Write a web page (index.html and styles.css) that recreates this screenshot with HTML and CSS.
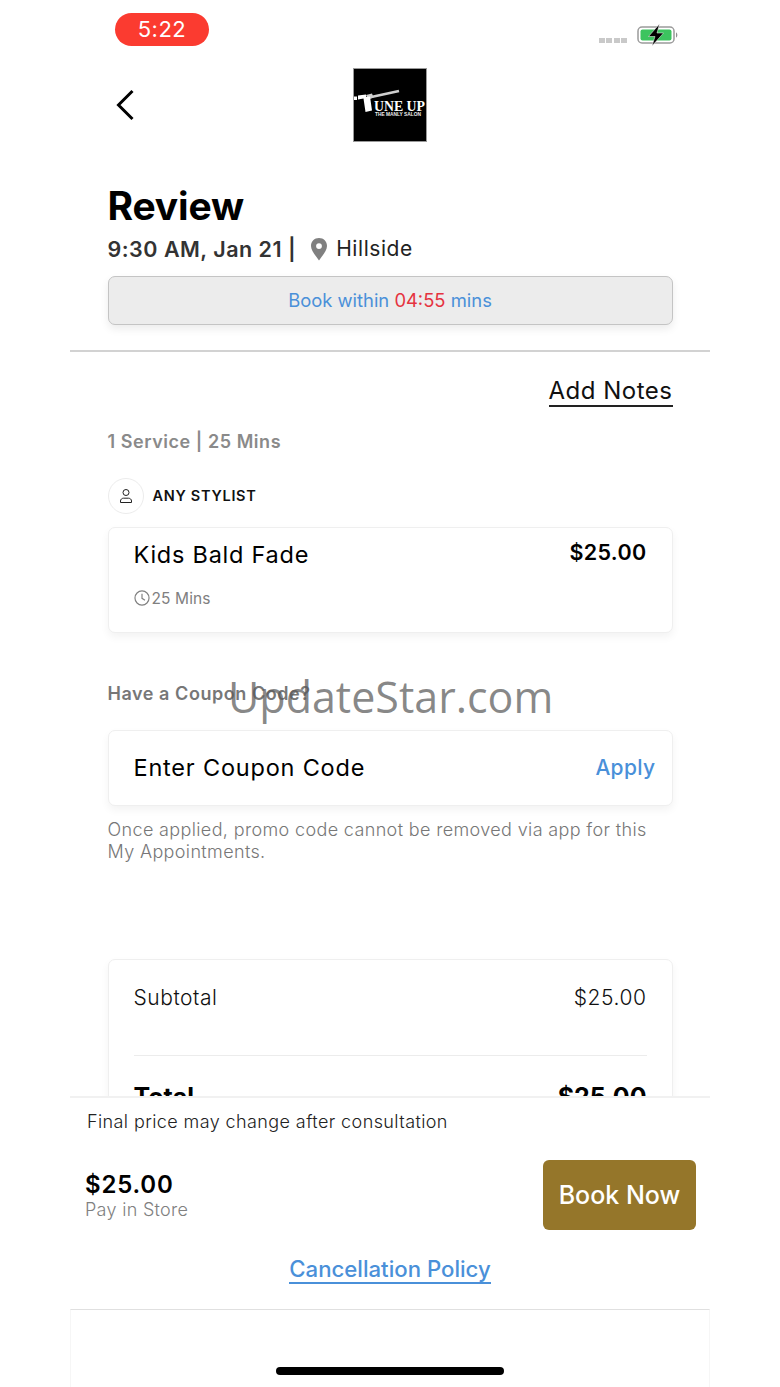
FILE: index.html
```html
<!DOCTYPE html>
<html lang="en">
<head>
    <meta charset="UTF-8">
    <meta name="viewport" content="width=device-width, initial-scale=1.0">
    <title>Review</title>
    <link rel="stylesheet" href="styles.css">
</head>
<body>
    <div class="screen">
        <div class="scroll">
            <div class="status-bar">
                <div class="time-pill">5:22</div>
                <div class="status-icons">
                    <div class="signal"><span></span><span></span><span></span><span></span></div>
                    <svg class="battery" width="42" height="22" viewBox="0 0 42 22">
                        <rect x="1" y="3" width="36" height="16" rx="4" fill="none" stroke="#9b9b9b" stroke-width="1.500"/>
                        <rect x="3.500" y="5.500" width="31" height="11" rx="2" fill="#3cc45f"/>
                        <path d="M39 8.500c1.800 .5 1.800 4.500 0 5z" fill="#8f8f8f"/>
                        <path d="M22.500 0 11.500 12.500h6.500l-3 9.500L26.500 9h-6.500z" fill="#000" stroke="#fff" stroke-width=".5"/>
                    </svg>
                </div>
            </div>

            <div class="nav">
                <svg class="back" width="20" height="32" viewBox="0 0 20 32">
                    <path d="M17.500 2 3.500 16l14 14" fill="none" stroke="#000" stroke-width="3"/>
                </svg>
                <div class="logo">
                    <svg width="74" height="74" viewBox="0 0 74 74">
                        <path d="M16 29.500 46 23" fill="none" stroke="#cfcfcf" stroke-width="2.800"/>
                        <path d="M13 27l6-1.500 1.500 4-5.500 2z" fill="#cfcfcf"/>
                        <path d="M1 28.500h3v3.500H1z" fill="#fff"/>
                        <path d="M5 27.500 13 26.500v2.500l4-.5 2 14-6.500 1.500-2-13.500L5 31.500z" fill="#fff"/>
                        <text class="logo-name" x="21" y="42.500" textLength="51" lengthAdjust="spacingAndGlyphs">UNE UP</text>
                        <text class="logo-sub" x="22" y="48" textLength="46" lengthAdjust="spacingAndGlyphs">THE MANLY SALON</text>
                    </svg>
                </div>
            </div>

            <div class="section">
                <h1>Review</h1>
                <div class="meta">
                    <strong>9:30 AM, Jan 21 |</strong>
                    <svg class="pin" width="18" height="24" viewBox="0 0 18 24">
                        <path fill-rule="evenodd" d="M9 1C4.300 1 1 4.500 1 9c0 5 5 10 8 14.500C12 19 17 14 17 9c0-4.500-3.300-8-8-8zm0 5.200a2.900 2.900 0 1 1 0 5.800 2.900 2.900 0 0 1 0-5.800z" fill="#808080"/>
                    </svg>
                    <span>Hillside</span>
                </div>
                <div class="timer">Book within <span class="red">04:55</span> mins</div>
            </div>

            <div class="divider"></div>

            <div class="section">
                <div class="notes-row"><a class="add-notes">Add Notes</a></div>
                <div class="label service-count">1 Service | 25 Mins</div>
                <div class="stylist">
                    <div class="avatar">
                        <svg width="16" height="16" viewBox="0 0 16 16" fill="none" stroke="#222" stroke-width="1">
                            <circle cx="8" cy="4.500" r="3"/>
                            <path d="M2.500 14.500v-1.500c0-1.700 1.500-2.800 3-2.800h5c1.500 0 3 1.100 3 2.800v1.500z"/>
                        </svg>
                    </div>
                    <span>ANY STYLIST</span>
                </div>

                <div class="card service-card">
                    <div class="row">
                        <span class="service-name">Kids Bald Fade</span>
                        <span class="service-price">$25.00</span>
                    </div>
                    <div class="duration">
                        <svg width="16" height="16" viewBox="0 0 15 15" fill="none" stroke="#808080" stroke-width="1.100">
                            <circle cx="7.500" cy="7.500" r="6.600"/>
                            <path d="M7.500 3.500v4.300l2.800 1.700"/>
                        </svg>
                        <span>25 Mins</span>
                    </div>
                </div>

                <div class="label coupon-label">Have a Coupon Code?</div>
                <div class="card coupon-card">
                    <span class="coupon-text">Enter Coupon Code</span>
                    <span class="apply">Apply</span>
                </div>
                <p class="promo-note">Once applied, promo code cannot be removed via app for this My Appointments.</p>

                <div class="card totals-card">
                    <div class="row subtotal"><span>Subtotal</span><span>$25.00</span></div>
                    <div class="card-line"></div>
                    <div class="row total"><span>Total</span><span>$25.00</span></div>
                </div>
            </div>
        </div>

        <div class="footer">
            <div class="final-note">Final price may change after consultation</div>
            <div class="pay-row">
                <div class="pay-info">
                    <div class="pay-price">$25.00</div>
                    <div class="pay-where">Pay in Store</div>
                </div>
                <button class="btn-book">Book Now</button>
            </div>
            <div class="cancel-row"><a class="cancel-link">Cancellation Policy</a></div>
            <div class="footer-bottom">
                <div class="home-bar"></div>
            </div>
        </div>

        <div class="watermark">UpdateStar.com</div>
    </div>
</body>
</html>
```

FILE: styles.css
```css
* {
    box-sizing: border-box;
}
html, body {
    margin: 0;
    background: #fff;
}
body {
    font-family: Inter, "Noto Sans", sans-serif;
    color: #000;
    height: 1387px;
    overflow: hidden;
}
.screen {
    width: 640px;
    height: 1387px;
    margin: 0 auto;
    position: relative;
    display: flex;
    flex-direction: column;
    overflow: hidden;
}
.scroll {
    height: 1096px;
    flex: none;
    overflow: hidden;
}

/* status bar */
.status-bar {
    height: 68px;
    padding: 13px 31px 0 45px;
    display: flex;
    justify-content: space-between;
    align-items: flex-start;
}
.time-pill {
    width: 94px;
    height: 33px;
    line-height: 33px;
    background: #fb3b30;
    color: #fff;
    border-radius: 17px;
    text-align: center;
    font-size: 22px;
    letter-spacing: .5px;
}
.status-icons {
    display: flex;
    align-items: flex-end;
    gap: 10px;
    padding-top: 11px;
}
.signal {
    display: flex;
    gap: 1.500px;
    padding-bottom: 3px;
}
.signal span {
    width: 6px;
    height: 5px;
    background: #c9c9c9;
}

/* nav */
.nav {
    height: 74px;
    position: relative;
    display: flex;
    justify-content: center;
}
.back {
    position: absolute;
    left: 45px;
    top: 21px;
}
.logo {
    width: 74px;
    height: 74px;
    background: #000;
    border: 1px solid #999;
}
.logo svg {
    display: block;
    margin: -1px;
}
.logo-name {
    font-family: "Liberation Serif", serif;
    font-weight: 700;
    font-size: 15px;
    fill: #fff;
}
.logo-sub {
    font-family: "Liberation Sans", sans-serif;
    font-weight: 700;
    font-size: 5px;
    fill: #eee;
}

/* sections */
.section {
    padding: 0 37.500px;
}
h1 {
    margin: 40px 0 0;
    font-size: 39px;
    line-height: 48px;
    font-weight: 700;
    letter-spacing: -0.15px;
}
.meta {
    margin-top: 4px;
    height: 29px;
    display: flex;
    align-items: center;
    font-size: 21.500px;
    color: #333;
}
.meta strong {
    font-weight: 600;
    letter-spacing: .5px;
}
.meta span {
    font-size: 21px;
    color: #222;
    letter-spacing: .55px;
}
.pin {
    margin: 1px 8px 0 14px;
}
.timer {
    margin-top: 13px;
    height: 49px;
    line-height: 47px;
    background: #ececec;
    border: 1.500px solid #c4c4c4;
    border-radius: 7px;
    box-shadow: 0 4px 8px rgba(0,0,0,0.08);
    text-align: center;
    font-size: 18.400px;
    color: #4a90d9;
}
.red {
    color: #e53340;
}
.divider {
    height: 1.500px;
    background: #d2d2d2;
    margin-top: 25px;
}
.notes-row {
    margin-top: 25px;
    display: flex;
    justify-content: flex-end;
}
.add-notes {
    font-size: 24px;
    line-height: 28px;
    color: #111;
    letter-spacing: .5px;
    border-bottom: 2px solid #222;
}
.label {
    font-size: 18px;
    font-weight: 600;
    color: #8a8a8a;
    line-height: 22px;
    letter-spacing: .55px;
}
.service-count {
    margin-top: 24px;
}
.stylist {
    margin-top: 25px;
    display: flex;
    align-items: center;
    gap: 9px;
    font-size: 14.500px;
    font-weight: 600;
    letter-spacing: .7px;
    color: #111;
}
.avatar {
    width: 36px;
    height: 36px;
    border: 1.500px solid #ececec;
    border-radius: 50%;
    display: flex;
    align-items: center;
    justify-content: center;
}
.card {
    background: #fff;
    border: 1.500px solid #efefef;
    border-radius: 7px;
    box-shadow: 0 4px 8px rgba(0,0,0,0.05);
}
.row {
    display: flex;
    justify-content: space-between;
}
.service-card {
    margin-top: 13px;
    height: 106px;
    padding: 12px 25px 0;
}
.service-name {
    font-size: 23.500px;
    line-height: 29px;
    letter-spacing: .75px;
}
.service-price {
    font-size: 21.500px;
    line-height: 24px;
    font-weight: 600;
    letter-spacing: .35px;
}
.duration {
    margin-top: 20px;
    display: flex;
    align-items: center;
    gap: 2px;
    font-size: 15.500px;
    letter-spacing: .1px;
    color: #808080;
}
.coupon-label {
    margin-top: 50px;
    color: #777;
}
.coupon-card {
    margin-top: 25px;
    height: 76px;
    padding: 0 16px 0 25px;
    display: flex;
    justify-content: space-between;
    align-items: center;
}
.coupon-text {
    font-size: 23.500px;
    letter-spacing: .8px;
}
.apply {
    font-size: 21px;
    font-weight: 500;
    color: #4a90d9;
    letter-spacing: .35px;
}
.promo-note {
    margin: 13px 0 0;
    font-size: 18px;
    line-height: 22px;
    font-weight: 300;
    letter-spacing: .36px;
    color: #777;
}
.totals-card {
    margin-top: 96px;
    height: 200px;
    padding: 0 25px;
}
.subtotal {
    margin-top: 25px;
    font-size: 21px;
    line-height: 26px;
    font-weight: 300;
    letter-spacing: .55px;
    color: #111;
}
.card-line {
    height: 1.500px;
    background: #ececec;
    margin-top: 44px;
}
.total {
    margin-top: 27px;
    font-size: 25px;
    line-height: 28px;
    font-weight: 700;
}

/* fixed footer */
.footer {
    flex: 1;
    background: #fff;
    border-top: 2px solid #f1f1f1;
    display: flex;
    flex-direction: column;
}
.final-note {
    margin: 13px 0 0 17px;
    font-size: 18px;
    line-height: 22px;
    font-weight: 300;
    letter-spacing: .4px;
    color: #222;
}
.pay-row {
    margin-top: 27px;
    padding: 0 14px 0 15px;
    display: flex;
    justify-content: space-between;
    align-items: center;
}
.pay-info {
    padding-top: 2px;
}
.pay-price {
    font-size: 24px;
    line-height: 28px;
    font-weight: 600;
    letter-spacing: .8px;
}
.pay-where {
    font-size: 18px;
    line-height: 22px;
    font-weight: 300;
    letter-spacing: .3px;
    color: #808080;
}
.btn-book {
    width: 153px;
    height: 70px;
    background: #95762a;
    color: #fff;
    border: none;
    border-radius: 6px;
    font-family: inherit;
    font-size: 25px;
    font-weight: 500;
    padding: 0;
}
.cancel-row {
    margin-top: 26px;
    text-align: center;
}
.cancel-link {
    font-size: 22.200px;
    line-height: 26px;
    font-weight: 500;
    color: #4a90d9;
    display: inline-block;
    border-bottom: 2px solid #4a90d9;
}
.footer-bottom {
    flex: 1;
    margin-top: 25px;
    border-top: 1.500px solid #e0e0e0;
    border-left: 1px solid #f6f6f6;
    border-right: 1px solid #f6f6f6;
    display: flex;
    justify-content: center;
    align-items: flex-end;
    padding-bottom: 12px;
}
.home-bar {
    width: 228px;
    height: 8px;
    background: #000;
    border-radius: 4px;
}
.watermark {
    position: absolute;
    left: 158px;
    top: 667px;
    font-family: "Open Sans", sans-serif;
    font-size: 43px;
    line-height: 60px;
    color: rgba(90, 90, 90, 0.72);
    white-space: nowrap;
}
```
